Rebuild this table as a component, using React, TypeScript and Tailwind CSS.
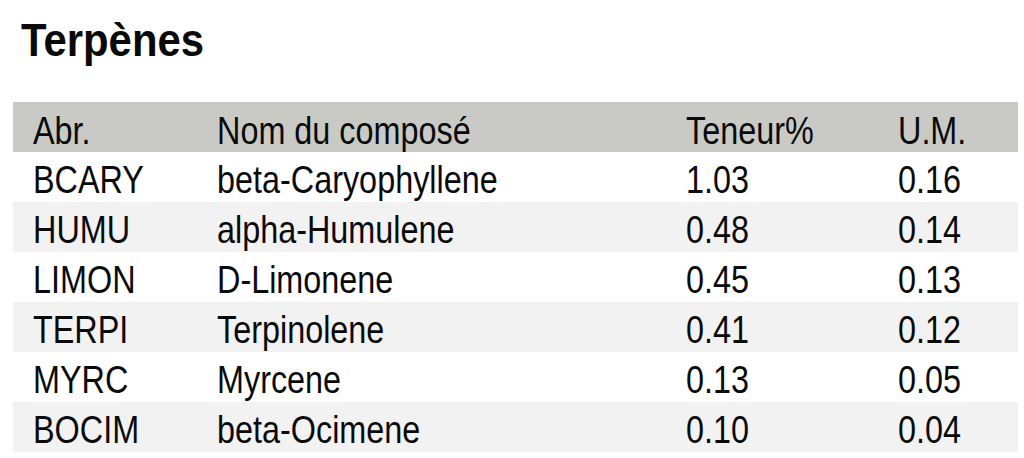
import React from "react";

const rows = [
  ["BCARY", "beta-Caryophyllene", "1.03", "0.16"],
  ["HUMU", "alpha-Humulene", "0.48", "0.14"],
  ["LIMON", "D-Limonene", "0.45", "0.13"],
  ["TERPI", "Terpinolene", "0.41", "0.12"],
  ["MYRC", "Myrcene", "0.13", "0.05"],
  ["BOCIM", "beta-Ocimene", "0.10", "0.04"],
];

const font = { fontFamily: '"Liberation Sans Narrow", "Arial Narrow", "Liberation Sans", Arial, sans-serif' };

function Cell({ children }: { children: React.ReactNode }) {
  return (
    <div className="whitespace-nowrap">
      <span className="inline-block origin-left scale-x-[0.83]">{children}</span>
    </div>
  );
}

export default function App() {
  return (
    <div className="w-[1024px] h-[458px] bg-white overflow-hidden text-[#0a0a0a]" style={font}>
      <h1 className="pt-[17px] pl-[21px] text-[46px] leading-[46px] font-bold whitespace-nowrap">
        <span className="inline-block origin-left scale-x-[0.91]">Terpènes</span>
      </h1>
      <div className="mt-[39px] ml-[13px] w-[1005px]">
        <div className="grid grid-cols-[184px_469px_212px_1fr] pl-[20px] h-[50px] pt-[7px] leading-[44px] text-[39px] bg-[#c9cac5]">
          <Cell>Abr.</Cell>
          <Cell>Nom du composé</Cell>
          <Cell>Teneur%</Cell>
          <Cell>U.M.</Cell>
        </div>
        {rows.map((r, i) => (
          <div
            key={r[0]}
            className={`grid grid-cols-[184px_469px_212px_1fr] pl-[20px] h-[50px] pt-[6px] leading-[44px] text-[39px] ${i % 2 === 1 ? "bg-[#f2f2f2]" : "bg-white"}`}
          >
            <Cell>{r[0]}</Cell>
            <Cell>{r[1]}</Cell>
            <Cell>{r[2]}</Cell>
            <Cell>{r[3]}</Cell>
          </div>
        ))}
      </div>
    </div>
  );
}
